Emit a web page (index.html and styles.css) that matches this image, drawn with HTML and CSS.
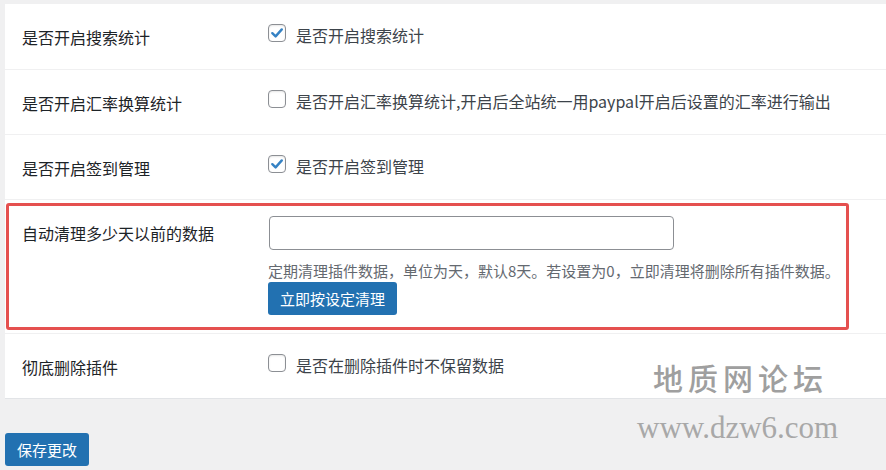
FILE: index.html
```html
<!DOCTYPE html>
<html>
<head>
  <meta charset="utf-8">
  <link rel="stylesheet" href="styles.css">
</head>
<body>
  <div class="settings-panel">
    <div class="setting-row first">
      <div class="setting-label">是否开启搜索统计</div>
      <div class="setting-control">
        <label class="check-line">
          <span class="checkbox checked">
            <svg viewBox="0 0 18 18" width="18" height="18"><polyline points="4.3,9.2 7.6,12.4 13.8,5.4" /></svg>
          </span>
          <span>是否开启搜索统计</span>
        </label>
      </div>
    </div>

    <div class="setting-row">
      <div class="setting-label">是否开启汇率换算统计</div>
      <div class="setting-control">
        <label class="check-line">
          <span class="checkbox"></span>
          <span>是否开启汇率换算统计,开启后全站统一用paypal开启后设置的汇率进行输出</span>
        </label>
      </div>
    </div>

    <div class="setting-row">
      <div class="setting-label">是否开启签到管理</div>
      <div class="setting-control">
        <label class="check-line">
          <span class="checkbox checked">
            <svg viewBox="0 0 18 18" width="18" height="18"><polyline points="4.3,9.2 7.6,12.4 13.8,5.4" /></svg>
          </span>
          <span>是否开启签到管理</span>
        </label>
      </div>
    </div>

    <div class="setting-row tall">
      <div class="highlight-box">
        <div class="setting-label">自动清理多少天以前的数据</div>
        <div class="setting-control">
          <input class="text-input" type="text">
          <p class="description">定期清理插件数据，单位为天，默认8天。若设置为0，立即清理将删除所有插件数据。</p>
          <button class="blue-button">立即按设定清理</button>
        </div>
      </div>
    </div>

    <div class="setting-row last">
      <div class="setting-label">彻底删除插件</div>
      <div class="setting-control">
        <label class="check-line">
          <span class="checkbox"></span>
          <span>是否在删除插件时不保留数据</span>
        </label>
      </div>
    </div>
  </div>

  <div class="submit-area">
    <button class="blue-button save">保存更改</button>
  </div>

  <!-- watermark -->
  <div class="watermark">
    <div class="wm-name">地质网论坛</div>
    <div class="wm-url">www.dzw6.com</div>
  </div>
</body>
</html>
```

FILE: styles.css
```css
body {
  margin: 0;
  background: #f0f0f1;
  font-family: "Noto Sans CJK SC", "Noto Sans", sans-serif;
  color: #1d2327;
  position: relative;
  min-height: 470px;
  overflow: hidden;
}

.settings-panel {
  background: #fff;
  margin: 4px 0 0 5px;
  border-bottom: 1px solid #e2e4e7;
}

.setting-row {
  display: grid;
  grid-template-columns: 263px 1fr;
  height: 65px;
  box-sizing: border-box;
  border-bottom: 1px solid #f0f0f1;
}

.setting-row.first {
  height: 66px;
}

.setting-row.last {
  height: 64px;
  border-bottom: none;
}

.setting-label {
  padding: 21px 0 0 17px;
  font-size: 16px;
  line-height: 24px;
}

.setting-control {
  padding-top: 19px;
  font-size: 16px;
  line-height: 24px;
  color: #3c434a;
}

.check-line {
  display: flex;
  align-items: flex-start;
  gap: 10px;
}

.checkbox {
  width: 18px;
  height: 18px;
  box-sizing: border-box;
  border: 1px solid #8c8f94;
  border-radius: 4px;
  background: #fff;
  box-shadow: inset 0 1px 2px rgba(0, 0, 0, 0.1);
  margin-top: 1px;
  flex-shrink: 0;
  position: relative;
}

.checkbox svg {
  position: absolute;
  left: -1px;
  top: -1px;
}

.checkbox polyline {
  fill: none;
  stroke: #3582c4;
  stroke-width: 2.4;
  stroke-linecap: round;
  stroke-linejoin: round;
}

/* Cleanup row with red highlight */
.setting-row.tall {
  display: block;
  height: 131px;
}

.highlight-box {
  display: grid;
  grid-template-columns: 259px 1fr;
  margin: 3px 37px 0 1px;
  height: 127px;
  box-sizing: border-box;
  border: 3px solid #e5504f;
  border-radius: 3px;
}

.highlight-box .setting-label {
  padding: 15px 0 0 13px;
}

.highlight-box .setting-control {
  padding-top: 10px;
  display: flex;
  flex-direction: column;
  align-items: flex-start;
}

.text-input {
  width: 405px;
  height: 34px;
  box-sizing: border-box;
  border: 1px solid #8c8f94;
  border-radius: 4px;
  margin: 0 0 0 1px;
  font-family: inherit;
  font-size: 15px;
}

.description {
  margin: 10px 0 0;
  font-size: 15px;
  line-height: 22px;
  color: #646970;
  white-space: nowrap;
}

.blue-button {
  background: #2271b1;
  color: #fff;
  border: none;
  border-radius: 3px;
  padding: 0 12px;
  height: 33px;
  font-family: inherit;
  font-size: 15px;
  line-height: 33px;
  cursor: pointer;
}

.submit-area {
  padding: 34px 0 0 5px;
}

.blue-button.save {
  width: 84px;
  padding: 0;
}

.watermark {
  position: absolute;
  left: 637px;
  top: 355px;
  width: 205px;
  pointer-events: none;
}

.wm-name {
  padding-left: 16px;
  font-size: 30px;
  line-height: 44px;
  letter-spacing: 5px;
  font-weight: 500;
  color: #9f9f9f;
}

.wm-url {
  margin-top: 11px;
  font-family: "Liberation Serif", serif;
  font-size: 31px;
  line-height: 36px;
  color: #a8a8a8;
}
```
